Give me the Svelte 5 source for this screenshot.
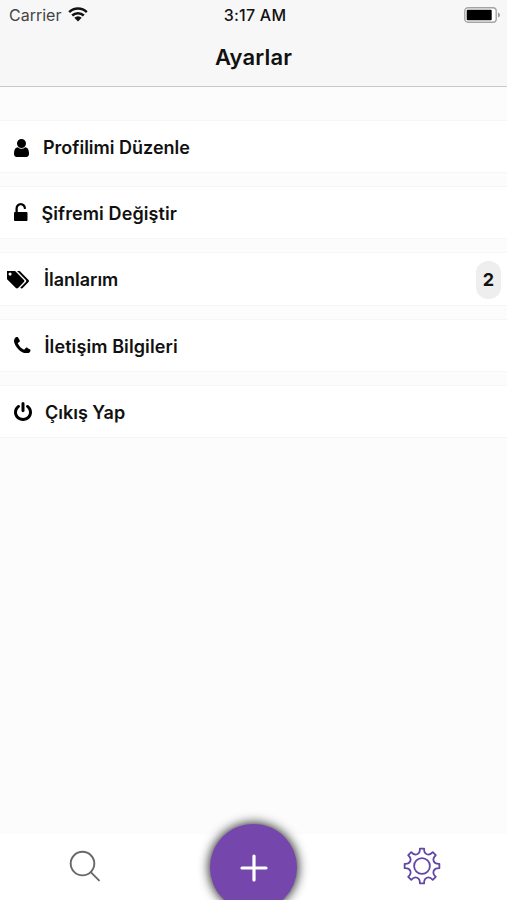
<script>
	const rows = [
		{
			label: 'Profilimi Düzenle',
			name: 'user',
			box: '256 128 1280 1536',
			path: 'M1536 1399q0 109-62.5 187t-150.5 78h-854q-88 0-150.5-78t-62.5-187q0-85 8.5-160.5t31.5-152 58.5-131 94-89 134.5-34.5q131 128 313 128t313-128q76 0 134.5 34.5t94 89 58.5 131 31.5 152 8.5 160.5zm-256-887q0 159-112.5 271.5t-271.5 112.5-271.5-112.5-112.5-271.5 112.5-271.5 271.5-112.5 271.5 112.5 112.5 271.5z'
		},
		{
			label: 'Şifremi Değiştir',
			name: 'lock',
			box: '320 0 1152 1536',
			path: 'M1376 768q40 0 68 28t28 68v576q0 40-28 68t-68 28h-960q-40 0-68-28t-28-68v-576q0-40 28-68t68-28h32v-320q0-185 131.5-316.5t316.5-131.5 316.5 131.5 131.5 316.5q0 26-19 45t-45 19h-64q-26 0-45-19t-19-45q0-106-75-181t-181-75-181 75-75 181v320h736z'
		},
		{
			label: 'İlanlarım',
			name: 'tags',
			badge: 2,
			box: '0 192 1835 1451',
			path: 'M384 448q0-53-37.5-90.5t-90.5-37.5-90.5 37.5-37.5 90.5 37.5 90.5 90.5 37.5 90.5-37.5 37.5-90.5zm1067 576q0 53-37 90l-491 492q-39 37-91 37-53 0-90-37l-715-716q-38-37-64.5-101t-26.5-117v-416q0-52 38-90t90-38h416q53 0 117 26.5t102 64.5l715 714q37 39 37 91zm384 0q0 53-37 90l-491 492q-39 37-91 37-36 0-59-14t-53-45l470-470q37-37 37-90 0-52-37-91l-715-714q-38-38-102-64.5t-117-26.5h224q53 0 117 26.5t102 64.5l715 714q37 39 37 91z'
		},
		{
			label: 'İletişim Bilgileri',
			name: 'phone',
			box: '192 128 1408 1408',
			path: 'M1600 1240q0 27-10 70.5t-21 68.5q-21 50-122 106-94 51-186 51-27 0-53-3.5t-57.5-12.5-47-14.5-55.5-20.5-49-18q-98-35-175-83-127-79-264-216t-216-264q-48-77-83-175-3-9-18-49t-20.5-55.5-14.5-47-12.5-57.5-3.5-53q0-92 51-186 56-101 106-122 25-11 68.5-21t70.5-10q14 0 21 3 18 6 53 76 11 19 30 54t35 63.5 31 53.5q3 4 17.5 25t21.5 35.5 7 28.5q0 20-28.5 50t-62 55-62 53-28.5 46q0 9 5 22.5t8.5 20.5 14 24 11.5 19q76 137 174 235t235 174q2 1 19 11.5t24 14 20.5 8.5 22.5 5q18 0 46-28.5t53-62 55-62 50-28.5q14 0 28.5 7t35.5 21.5 25 17.5q25 15 53.5 31t63.5 35 54 30q70 35 76 53 3 7 3 21z'
		},
		{
			label: 'Çıkış Yap',
			name: 'power',
			box: '128 0 1536 1664',
			path: 'M1664 896q0 156-61 298t-164 245-245 164-298 61-298-61-245-164-164-245-61-298q0-182 80.5-343t226.5-270q43-32 95.5-25t83.5 50q32 42 24.5 94.5t-49.5 84.5q-98 74-151.5 181t-53.5 228q0 104 40.5 198.5t109.5 163.5 163.5 109.5 198.5 40.5 198.5-40.5 163.5-109.5 109.5-163.5 40.5-198.5q0-121-53.5-228t-151.5-181q-42-32-49.5-84.5t24.5-94.5q31-43 84-50t95 25q146 109 226.5 270t80.5 343zm-640-768v640q0 52-38 90t-90 38-90-38-38-90v-640q0-52 38-90t90-38 90 38 38 90z'
		}
	];

	function polar(r, deg) {
		const a = (deg * Math.PI) / 180;
		return `${(r * Math.cos(a)).toFixed(2)} ${(r * Math.sin(a)).toFixed(2)}`;
	}

	// eight teeth joined by rounded valleys
	function gearPath() {
		let d = `M${polar(17.5, -7)}`;
		for (let a = 0; a < 360; a += 45) {
			d += `L${polar(17.5, a + 7)}`;
			d += `C${polar(11.6, a + 9)} ${polar(11.6, a + 36)} ${polar(17.5, a + 38)}`;
		}
		return d + 'Z';
	}
</script>

<div class="screen">
	<header>
		<div class="status">
			<div class="carrier">
				<span>Carrier</span>
				<svg width="20" height="15" viewBox="0 0 20 15">
					<path d="M1.2 5.2a12.6 12.6 0 0 1 17.6 0M4.2 8.5a8.3 8.3 0 0 1 11.6 0" fill="none" stroke="#111" stroke-width="2.5" />
					<path d="M6.3 10.7a5.2 5.2 0 0 1 7.4 0L10 14.4z" fill="#111" />
				</svg>
			</div>
			<time>3:17 AM</time>
			<svg class="battery" width="37" height="16" viewBox="0 0 37 16">
				<rect x="0.8" y="0.8" width="31.4" height="14.4" rx="3.2" fill="#fff" stroke="#a4a4a4" stroke-width="1.4" />
				<rect x="2.7" y="2.7" width="25" height="10.6" rx="1" fill="#000" />
				<path d="M34 5.6q2 .6 2 2.4t-2 2.4z" fill="#999" />
			</svg>
		</div>
		<h1>Ayarlar</h1>
	</header>

	<main>
		{#each rows as row}
			<div class="row {row.name}">
				<svg viewBox={row.box} preserveAspectRatio="none"><path d={row.path} /></svg>
				<span class="label">{row.label}</span>
				{#if row.badge}
					<span class="badge">{row.badge}</span>
				{/if}
			</div>
		{/each}
	</main>

	<nav>
		<svg width="32" height="32" viewBox="0 0 32 32" fill="none" stroke="#686868" stroke-width="1.9" stroke-linecap="round">
			<circle cx="13.5" cy="13.6" r="11.8" />
			<path d="M22 22.4l8 8" />
		</svg>
		<div class="add">
			<svg width="28" height="28" viewBox="0 0 28 28" stroke="#fff" stroke-width="3.2" stroke-linecap="round">
				<path d="M14 2v24M2 14h24" />
			</svg>
		</div>
		<svg class="gear" width="38" height="38" viewBox="-19 -19 38 38" fill="none" stroke="#6246a5" stroke-width="1.8" stroke-linejoin="round">
			<path d={gearPath()} />
			<circle r="7.9" />
		</svg>
	</nav>
</div>

<style>
	:global(body) {
		margin: 0;
	}

	.screen {
		display: flex;
		flex-direction: column;
		height: 900px;
		overflow: hidden;
		background: #fcfcfc;
		color: #111;
		font-family: Inter, Roboto, sans-serif;
	}

	header {
		box-sizing: border-box;
		height: 87px;
		background: #f7f7f7;
		border-bottom: 1px solid #c9c9c9;
	}

	.status {
		display: grid;
		grid-template-columns: 1fr auto 1fr;
		align-items: center;
		height: 29px;
		padding: 0 6px 0 9px;
		font-size: 16px;
	}

	.carrier {
		display: flex;
		align-items: center;
		gap: 7px;
		color: #444;
	}

	.carrier svg {
		margin-top: -1px;
	}

	time {
		font-weight: 500;
		letter-spacing: 0.25px;
	}

	.battery {
		justify-self: end;
	}

	h1 {
		margin: 14px 0 0;
		font-size: 22px;
		line-height: 28px;
		font-weight: 600;
		letter-spacing: 0.15px;
		text-align: center;
	}

	main {
		flex: 1;
		display: flex;
		flex-direction: column;
		gap: 13px;
		padding-top: 33px;
	}

	.row {
		display: flex;
		align-items: center;
		gap: 14px;
		box-sizing: border-box;
		height: 53.2px;
		padding: 2px 6px 0 14px;
		background: #fff;
		border-top: 1px solid #f6f6f6;
		border-bottom: 1px solid #f6f6f6;
	}

	.row svg {
		flex: none;
		fill: #000;
	}

	.label {
		font-size: 18px;
		font-weight: 600;
		white-space: nowrap;
	}

	.user svg {
		width: 15px;
		height: 18px;
	}

	.lock svg {
		width: 13.5px;
		height: 18px;
		margin-top: -3px;
	}

	.lock .label,
	.phone .label {
		letter-spacing: 0.1px;
	}

	.tags {
		gap: 15px;
		padding-left: 7px;
	}

	.tags svg {
		width: 22px;
		height: 17.5px;
	}

	.phone svg {
		width: 16.5px;
		height: 16.5px;
		margin-top: -2px;
	}

	.power {
		gap: 13px;
	}

	.power svg {
		width: 18px;
		height: 19px;
		margin-top: -2px;
	}

	.badge {
		width: 25px;
		margin-left: auto;
		border-radius: 12px;
		background: #eee;
		font-size: 18px;
		line-height: 38px;
		font-weight: 700;
		text-align: center;
	}

	nav {
		display: grid;
		grid-template-columns: repeat(3, 1fr);
		grid-template-rows: 66px;
		justify-items: center;
		align-items: center;
		height: 66px;
		background: #fff;
	}

	nav > svg {
		margin-bottom: 2px;
	}

	.gear {
		margin-right: 2px;
	}

	.add {
		display: flex;
		align-items: center;
		justify-content: center;
		width: 87px;
		height: 87px;
		margin-top: 1px;
		border-radius: 50%;
		background: #7547ad;
		box-shadow: 0 0 11px 1px #222;
	}
</style>
